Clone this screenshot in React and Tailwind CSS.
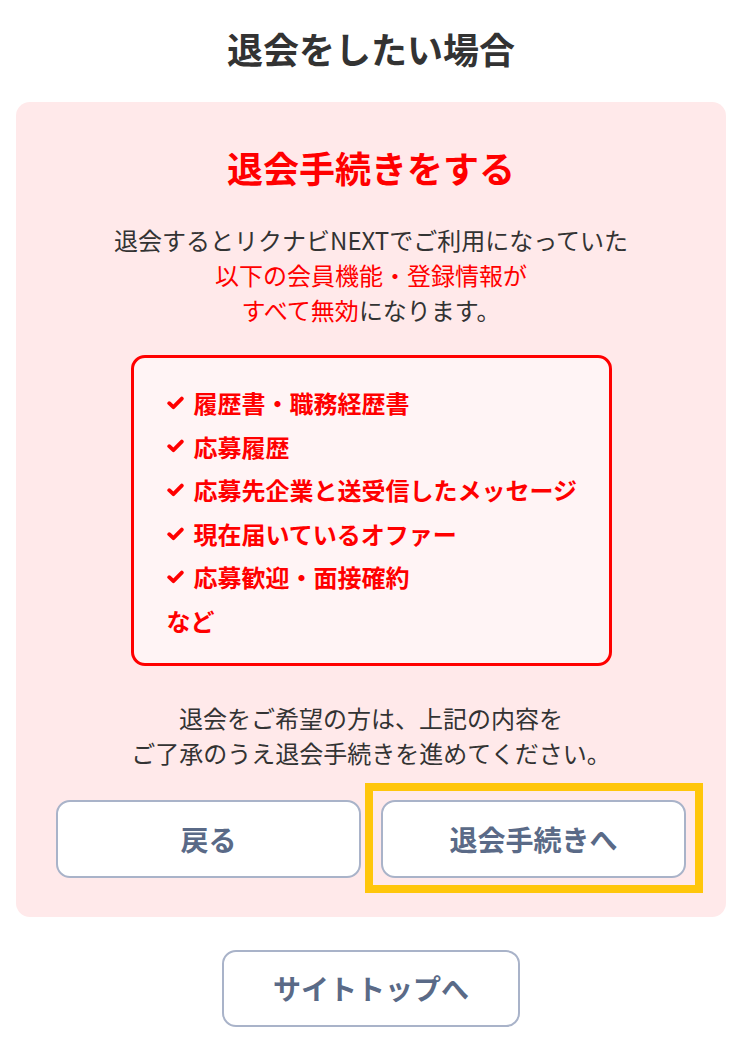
import React from 'react';

const items = [
  '履歴書・職務経歴書',
  '応募履歴',
  '応募先企業と送受信したメッセージ',
  '現在届いているオファー',
  '応募歓迎・面接確約',
];

function Check() {
  return (
    <svg viewBox="0 0 17 14" className="mr-[10px] h-[14px] w-[17px] shrink-0" fill="none">
      <path d="M2.2 7.2 L6.4 11.2 L14.8 2.6" stroke="#ff0000" strokeWidth="3.8" strokeLinecap="round" strokeLinejoin="round" />
    </svg>
  );
}

function OutlineButton({ children, className = 'w-full h-[78px]' }) {
  return (
    <button
      className={`flex items-center justify-center rounded-[14px] border-2 border-[#a9b3c9] bg-white text-[28px] font-bold text-[#5a6a87] ${className}`}
    >
      {children}
    </button>
  );
}

export default function App() {
  return (
    <div
      className="min-h-[1055px] w-[742px] bg-white pb-6"
      style={{ fontFamily: '"Noto Sans CJK JP", "Noto Sans", sans-serif' }}
    >
      {/* Heading */}
      <h2 className="pt-[21px] text-center text-[36px] font-bold leading-[54px] text-[#333]">
        退会をしたい場合
      </h2>

      {/* Withdrawal panel */}
      <div className="mx-4 mt-[27px] rounded-[14px] bg-[#ffe9ea] px-10 pt-[38px] pb-[39px]">
        <h3 className="text-center text-[36px] font-bold leading-[54px] text-[#ff0000]">
          退会手続きをする
        </h3>

        <p className="mt-[28px] text-center text-[24px] leading-[35px] text-[#333]">
          退会するとリクナビNEXTでご利用になっていた
          <br />
          <span className="text-[#ff0000]">以下の会員機能・登録情報が</span>
          <br />
          <span className="text-[#ff0000]">すべて無効</span>になります。
        </p>

        {/* Invalidated features */}
        <div className="mx-auto mt-[28px] w-[481px] rounded-[14px] border-[3px] border-[#ff0000] bg-[#fff4f5] pt-[23px] pb-[20px] pl-[33px]">
          <ul>
            {items.map((item) => (
              <li key={item} className="flex items-center text-[24px] font-bold leading-[43.6px] text-[#ff0000]">
                <Check />
                {item}
              </li>
            ))}
          </ul>
          <p className="text-[24px] font-bold leading-[43.6px] text-[#ff0000]">など</p>
        </div>

        <p className="mt-[34px] text-center text-[24px] leading-[35px] text-[#333]">
          退会をご希望の方は、上記の内容を
          <br />
          ご了承のうえ退会手続きを進めてください。
        </p>

        <div className="mt-[30px] grid grid-cols-2 gap-5">
          <OutlineButton>戻る</OutlineButton>
          <div className="relative">
            <OutlineButton>退会手続きへ</OutlineButton>
            {/* highlight frame */}
            <span className="pointer-events-none absolute -top-[17px] -right-[17px] -bottom-[15px] -left-[16px] border-8 border-[#ffc60b]" />
          </div>
        </div>
      </div>

      <div className="mt-[33px] flex justify-center">
        <OutlineButton className="h-[77px] w-[298px]">サイトトップへ</OutlineButton>
      </div>
    </div>
  );
}
